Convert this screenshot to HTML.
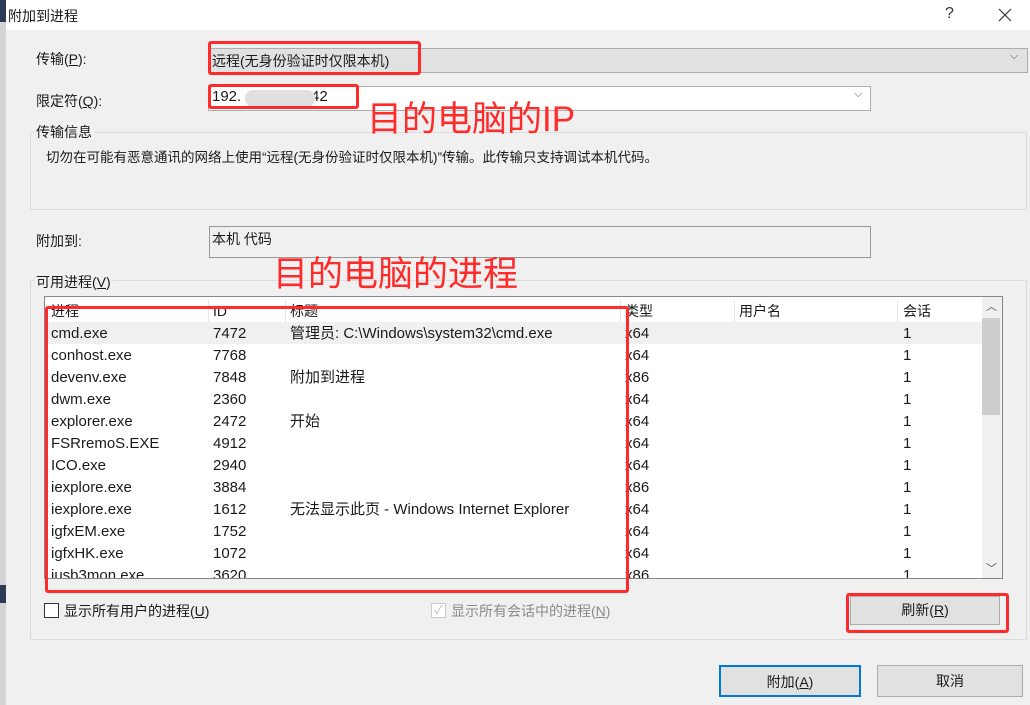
<!DOCTYPE html>
<html><head><meta charset="utf-8"><style>
*{margin:0;padding:0;box-sizing:border-box}
body{width:1030px;height:705px;background:#f0f0f0;position:relative;overflow:hidden;font-family:"Liberation Sans","Noto Sans CJK SC",sans-serif;font-size:14px;color:#1a1a1a}
.a{position:absolute;white-space:nowrap}
.red{position:absolute;border:3px solid #ff2a2a;border-radius:3px}
.rt{position:absolute;color:#ff2a2a;font-size:35px;line-height:36px;white-space:nowrap;font-family:"Liberation Sans","Noto Sans CJK SC",sans-serif}
.row{position:absolute;left:45px;width:937px;height:22px;font-size:15px;line-height:22px}
.row span{position:absolute;top:0}
.btn{position:absolute;background:#e1e1e1;border:1px solid #adadad;text-align:center;font-size:14px}
</style></head><body>
<div class="a" style="left:0;top:0;width:6px;height:705px;background:#d4d4d4"></div>
<div class="a" style="left:0;top:0;width:6px;height:22px;background:#2b3a55"></div>
<div class="a" style="left:0;top:585px;width:6px;height:18px;background:#2b3a55"></div>
<div class="a" style="left:6px;top:0;width:1024px;height:30px;background:#fff"></div>
<div class="a" style="left:8px;top:6px;font-size:14px">附加到进程</div>
<div class="a" style="left:945px;top:5px;font-size:16px;color:#333">?</div>
<svg class="a" style="left:998px;top:8px" width="14" height="14"><path d="M1 1L13 13M13 1L1 13" stroke="#333" stroke-width="1.2"/></svg>

<div class="a" style="left:36px;top:49px">传输(<u>P</u>):</div>
<div class="a" style="left:208px;top:48px;width:820px;height:25px;background:#e1e1e1;border:1px solid #adadad"></div>
<div class="a" style="left:212px;top:51px">远程(无身份验证时仅限本机)</div>
<div class="a" style="left:1010px;top:50px;font-size:11px;color:#555">⌵</div>

<div class="a" style="left:36px;top:91px">限定符(<u>Q</u>):</div>
<div class="a" style="left:208px;top:86px;width:663px;height:25px;background:#fff;border:1px solid #adadad"></div>
<div class="a" style="left:212px;top:88px;font-size:15px">192.</div>
<div class="a" style="left:311px;top:88px;font-size:15px">42</div>
<div class="a" style="left:245px;top:90px;width:70px;height:17px;background:#e0e0e0;border-radius:8px"></div>
<div class="a" style="left:854px;top:88px;font-size:11px;color:#555">⌵</div>

<div class="a" style="left:30px;top:132px;width:997px;height:78px;border:1px solid #dcdcdc"></div>
<div class="a" style="left:34px;top:122px;background:#f0f0f0;padding:0 2px">传输信息</div>
<div class="a" style="left:46px;top:146px;font-size:13.5px">切勿在可能有恶意通讯的网络上使用“远程(无身份验证时仅限本机)”传输。此传输只支持调试本机代码。</div>

<div class="a" style="left:36px;top:231px">附加到:</div>
<div class="a" style="left:209px;top:226px;width:662px;height:32px;border:1px solid #999"></div>
<div class="a" style="left:212px;top:229px">本机 代码</div>

<div class="a" style="left:30px;top:280px;width:997px;height:360px;border:1px solid #dcdcdc"></div>
<div class="a" style="left:34px;top:272px;background:#f0f0f0;padding:0 2px">可用进程(<u>V</u>)</div>

<div class="a" style="left:44px;top:296px;width:959px;height:283px;background:#fff;border:1px solid #828790"></div>
<div class="row" style="top:300px;font-size:14px">
<span style="left:6px">进程</span><span style="left:168px">ID</span><span style="left:245px">标题</span><span style="left:580px">类型</span><span style="left:694px">用户名</span><span style="left:858px">会话</span>
<span style="left:163px;width:1px;height:22px;background:#e5e5e5"></span><span style="left:240px;width:1px;height:22px;background:#e5e5e5"></span><span style="left:575px;width:1px;height:22px;background:#e5e5e5"></span><span style="left:689px;width:1px;height:22px;background:#e5e5e5"></span><span style="left:852px;width:1px;height:22px;background:#e5e5e5"></span>
</div>
<div class="a" style="left:45px;top:322px;width:937px;height:22px;background:#f0f0f0"></div>
<div class="row" style="top:323px"><span style="left:6px">cmd.exe</span><span style="left:168px">7472</span><span style="left:245px">管理员: C:\Windows\system32\cmd.exe</span><span style="left:580px">x64</span><span style="left:858px">1</span></div>
<div class="row" style="top:345px"><span style="left:6px">conhost.exe</span><span style="left:168px">7768</span><span style="left:580px">x64</span><span style="left:858px">1</span></div>
<div class="row" style="top:367px"><span style="left:6px">devenv.exe</span><span style="left:168px">7848</span><span style="left:245px">附加到进程</span><span style="left:580px">x86</span><span style="left:858px">1</span></div>
<div class="row" style="top:389px"><span style="left:6px">dwm.exe</span><span style="left:168px">2360</span><span style="left:580px">x64</span><span style="left:858px">1</span></div>
<div class="row" style="top:411px"><span style="left:6px">explorer.exe</span><span style="left:168px">2472</span><span style="left:245px">开始</span><span style="left:580px">x64</span><span style="left:858px">1</span></div>
<div class="row" style="top:433px"><span style="left:6px">FSRremoS.EXE</span><span style="left:168px">4912</span><span style="left:580px">x64</span><span style="left:858px">1</span></div>
<div class="row" style="top:455px"><span style="left:6px">ICO.exe</span><span style="left:168px">2940</span><span style="left:580px">x64</span><span style="left:858px">1</span></div>
<div class="row" style="top:477px"><span style="left:6px">iexplore.exe</span><span style="left:168px">3884</span><span style="left:580px">x86</span><span style="left:858px">1</span></div>
<div class="row" style="top:499px"><span style="left:6px">iexplore.exe</span><span style="left:168px">1612</span><span style="left:245px">无法显示此页 - Windows Internet Explorer</span><span style="left:580px">x64</span><span style="left:858px">1</span></div>
<div class="row" style="top:521px"><span style="left:6px">igfxEM.exe</span><span style="left:168px">1752</span><span style="left:580px">x64</span><span style="left:858px">1</span></div>
<div class="row" style="top:543px"><span style="left:6px">igfxHK.exe</span><span style="left:168px">1072</span><span style="left:580px">x64</span><span style="left:858px">1</span></div>
<div class="a" style="left:45px;top:565px;width:937px;height:13px;overflow:hidden"><div class="row" style="left:0;top:0"><span style="left:6px">iusb3mon.exe</span><span style="left:168px">3620</span><span style="left:580px">x86</span><span style="left:858px">1</span></div></div>
<div class="a" style="left:982px;top:297px;width:20px;height:281px;background:#f0f0f0"></div>
<div class="a" style="left:982px;top:318px;width:18px;height:97px;background:#cdcdcd"></div>
<div class="a" style="left:986px;top:298px;font-size:11px;color:#555">︿</div>
<div class="a" style="left:986px;top:560px;font-size:11px;color:#555">﹀</div>

<div class="a" style="left:44px;top:603px;width:15px;height:15px;background:#fff;border:1px solid #333"></div>
<div class="a" style="left:64px;top:601px">显示所有用户的进程(<u>U</u>)</div>
<div class="a" style="left:431px;top:603px;width:15px;height:15px;background:#fff;border:1px solid #ccc;color:#bbb;font-size:12px;line-height:13px;text-align:center">✓</div>
<div class="a" style="left:451px;top:601px;color:#8a8a8a">显示所有会话中的进程(<u>N</u>)</div>
<div class="btn" style="left:850px;top:596px;width:150px;height:29px;line-height:27px">刷新(<u>R</u>)</div>

<div class="btn" style="left:719px;top:665px;width:142px;height:32px;line-height:30px;border:2px solid #0078d7">附加(<u>A</u>)</div>
<div class="btn" style="left:877px;top:665px;width:146px;height:32px;line-height:30px">取消</div>

<div class="red" style="left:208px;top:41px;width:213px;height:34px"></div>
<div class="red" style="left:208px;top:84px;width:151px;height:25px"></div>
<div class="rt" style="left:367px;top:102px">目的电脑的IP</div>
<div class="rt" style="left:273px;top:257px">目的电脑的进程</div>
<div class="red" style="left:45px;top:306px;width:584px;height:287px"></div>
<div class="red" style="left:846px;top:593px;width:163px;height:40px"></div>
</body></html>
